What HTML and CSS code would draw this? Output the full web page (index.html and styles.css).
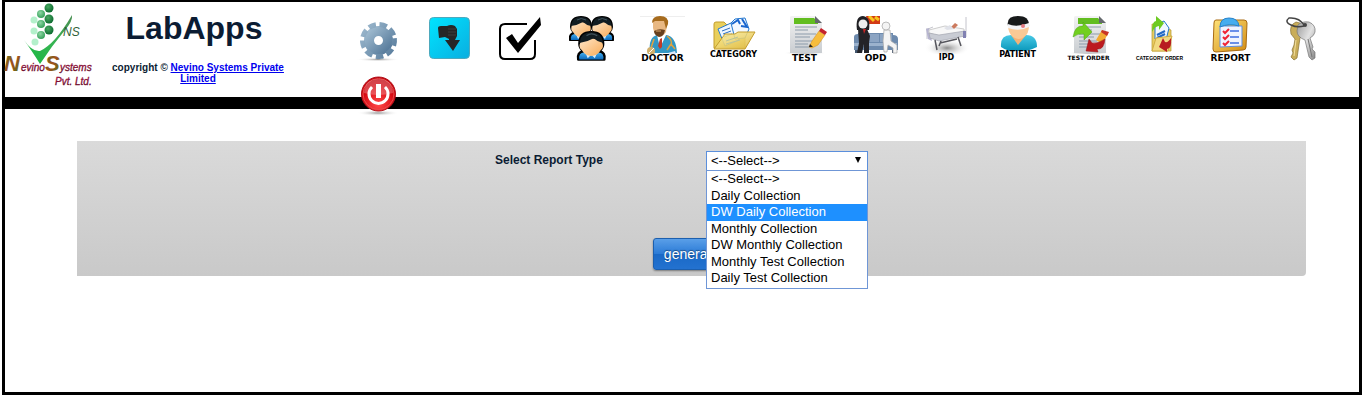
FILE: index.html
```html
<!DOCTYPE html>
<html lang="en">
<head>
    <meta charset="UTF-8">
    <meta name="viewport" content="width=device-width, initial-scale=1.0">
    <title>LabApps</title>
    <link rel="stylesheet" href="styles.css">
</head>
<body>
    <div class="page">
        <!-- Header -->
        <header class="header">
            <svg class="logo" viewBox="0 0 90 88" role="img" aria-label="Nevino Systems Pvt. Ltd.">
                <defs>
                    <linearGradient id="tick" x1="0" y1="1" x2="1" y2="0"><stop offset="0" stop-color="#16b83f"/><stop offset=".5" stop-color="#35b552"/><stop offset="1" stop-color="#4b8f54"/></linearGradient>
                    <linearGradient id="cap" x1="0" y1="0" x2="1" y2="1"><stop offset="0" stop-color="#4f7a1c"/><stop offset=".5" stop-color="#a2501c"/><stop offset="1" stop-color="#3c7a18"/></linearGradient>
                    <linearGradient id="word" x1="0" y1="0" x2="0" y2="1"><stop offset="0" stop-color="#d01050"/><stop offset="1" stop-color="#400818"/></linearGradient>
                    <radialGradient id="dot" cx=".4" cy=".35" r=".7"><stop offset="0" stop-color="#49a962"/><stop offset="1" stop-color="#08662b"/></radialGradient>
                    <radialGradient id="dot2" cx=".4" cy=".35" r=".7"><stop offset="0" stop-color="#8ed7a4"/><stop offset="1" stop-color="#2f9c54"/></radialGradient>
                </defs>
                <path d="M19 36 Q27 48 35 47 Q50 40 67 11 Q68 17 60 26 Q46 43 35 60 Q29 50 19 36Z" fill="url(#tick)"/>
                <g fill="#b4f0cb"><circle cx="29" cy="16" r="3.500"/><circle cx="29" cy="27" r="3.500"/><circle cx="30" cy="38" r="3.500"/></g>
                <g fill="url(#dot2)"><circle cx="36" cy="10" r="4"/><circle cx="36" cy="20" r="4"/><circle cx="36" cy="31" r="4"/></g>
                <g fill="url(#dot)"><circle cx="44" cy="4" r="4.500"/><circle cx="44" cy="15" r="4.500"/><circle cx="44" cy="26" r="4.500"/></g>
                <text class="logo-ns" x="58" y="32">NS</text>
                <text class="logo-cap" x="-1" y="67">N</text>
                <text class="logo-word" x="16" y="67">evino</text>
                <text class="logo-cap" x="40" y="67">S</text>
                <text class="logo-word" x="55" y="67">ystems</text>
                <text class="logo-word" x="50" y="81">Pvt. Ltd.</text>
            </svg>
            <div class="brand">
                <h1>LabApps</h1>
                <p>copyright © <a href="#">Nevino Systems Private Limited</a></p>
            </div>
            <nav class="menu">
                <a href="#" aria-label="Settings">
                    <svg viewBox="0 0 45 45">
                        <defs>
                            <linearGradient id="steel" x1="0" y1="0" x2="1" y2="1"><stop offset="0" stop-color="#9db9ce"/><stop offset="1" stop-color="#587c9c"/></linearGradient>
                            <radialGradient id="shade"><stop offset="0" stop-color="#999"/><stop offset="1" stop-color="#fff" stop-opacity="0"/></radialGradient>
                        </defs>
                        <ellipse cx="22" cy="43.500" rx="22" ry="2" fill="url(#shade)"/>
                        <circle cx="22.500" cy="24.500" r="9.500" fill="none" stroke="url(#steel)" stroke-width="10"/>
                        <circle cx="22.500" cy="24.500" r="16" fill="none" stroke="url(#steel)" stroke-width="5" stroke-dasharray="7.500 3.670" transform="rotate(-8 22.500 24.500)"/>
                    </svg>
                </a>
                <a href="#" aria-label="Download">
                    <svg viewBox="0 0 45 45">
                        <defs>
                            <linearGradient id="cyan" x1="0" y1="0" x2="1" y2="1"><stop offset="0" stop-color="#00e4ff"/><stop offset="1" stop-color="#0aaee0"/></linearGradient>
                        </defs>
                        <rect x="2.500" y="1.500" width="40" height="41" rx="4" fill="url(#cyan)" stroke="#4ea9bd"/>
                        <path d="M11 12 Q11 10 14 10 L20 10 Q24 8 28 10 L30 13 V20 L28 24 H33 L26 35 L18 24 H22 V23 L18 21 L12 22Z" fill="#262626"/>
                        <path d="M21 13h8M21 16h8M21 19h8" stroke="#3d3d3d"/>
                    </svg>
                </a>
                <a href="#" aria-label="Approve">
                    <svg viewBox="0 0 45 45">
                        <path d="M29 8 H7 Q2 8 2 13 V38 Q2 43 7 43 H32 Q37 43 37 38 V24" fill="none" stroke="#000" stroke-width="2"/>
                        <path d="M8 22 L14 18 L20 27 L42 1 L43 9 L20 37Z"/>
                    </svg>
                </a>
                <a href="#" aria-label="Users">
                    <svg viewBox="0 0 45 45">
                        <defs>
                            <linearGradient id="skin" x1="0" y1="0" x2="1" y2="1"><stop offset="0" stop-color="#ffe6c8"/><stop offset="1" stop-color="#f8ab58"/></linearGradient>
                            <linearGradient id="shirt" x1="0" y1="0" x2="0" y2="1"><stop offset="0" stop-color="#43aef0"/><stop offset="1" stop-color="#0b68ba"/></linearGradient>
                            <g id="person">
                                <path d="M1 24 Q0 18 5 17 Q2 14 2 11 Q2 1 12 1 Q22 1 22 11 Q22 14 19 17 Q24 18 23 24Z" fill="#000" stroke="#000" stroke-width="2" stroke-linejoin="round"/>
                                <path d="M2 24 Q1 18 6 18 H18 Q23 18 22 24Z" fill="url(#shirt)"/>
                                <path d="M7 18 L9 23 L12 20 L15 23 L17 18Z" fill="#d5ecfc"/>
                                <path d="M3 9 Q12 3 21 9 Q23 14 20 16 Q17 21 12 21 Q7 21 4 16 Q1 14 3 9Z" fill="url(#skin)"/>
                                <path d="M2 10 Q3 1 12 1 Q21 1 22 10 Q17 9 14 6 Q9 9 2 10Z" fill="#121d22"/>
                                <path d="M8 4 Q12 1 17 4" fill="none" stroke="#40525c"/>
                            </g>
                        </defs>
                        <use href="#person"/>
                        <use href="#person" x="21"/>
                        <use href="#person" transform="translate(8 15) scale(1.190)"/>
                    </svg>
                </a>
                <a href="#">
                    <svg class="art" viewBox="0 0 45 38">
                        <path d="M0 .500 H45" stroke="#eee"/>
                        <path d="M10 37 Q8 20 18 19 H26 Q36 20 37 37Z" fill="#3297c4"/>
                        <path d="M17 19 L20 32 L26 19Z" fill="#fff"/>
                        <path d="M20 23 L22 22 L22 31 L20 33 L18 30Z" fill="#c13b28"/>
                        <path d="M13 6 Q13 1 20 1 Q27 1 27 7 L26 16 Q23 21 19 20 Q14 18 13 12Z" fill="#e8b883"/>
                        <path d="M12 7 Q12 0 20 0 Q29 0 28 8 L26 13 L24 5 H15Z" fill="#a66b1d"/>
                        <path d="M14 15 Q19 12 25 14 Q24 21 19 21 Q14 19 14 15Z" fill="#67401e"/>
                        <path d="M16 15 h5" stroke="#dca76c"/>
                        <path d="M27 20 Q33 24 31 30 M31 28 L27 34 M31 28 L35 33 M14 23 L11 32" fill="none" stroke="#e3a23b" stroke-width="1.500"/>
                        <circle cx="11" cy="35" r="4" fill="#d0b06e"/>
                        <path d="M9 37 L14 32" stroke="#fff"/>
                        <path d="M28 37 L35 35 L36 38 H29Z" fill="#dce9fa"/>
                    </svg>
                    <span class="label">DOCTOR</span>
                </a>
                <a href="#">
                    <svg class="art art-short" viewBox="0 0 45 35">
                        <defs>
                            <linearGradient id="folder" x1="0" y1="0" x2="1" y2="1"><stop offset="0" stop-color="#fff3a3"/><stop offset="1" stop-color="#dcb63d"/></linearGradient>
                        </defs>
                        <path d="M3 32 V8 Q3 6 5 6 H13 L16 9 H34 V32Z" fill="#e9cf5c" stroke="#c49d2c"/>
                        <path d="M7 13 L20 7 L28 24 L14 30Z" fill="#eef6ff" stroke="#2579cf"/>
                        <path d="M20 7 L24 3 L34 2 L38 13 L34 22 L24 23Z" fill="#f4f9ff" stroke="#2579cf"/>
                        <path d="M11 15l8-3M12 18l8-3M13 21l8-3" stroke="#2c6fc4"/>
                        <path d="M21 8l6-4 2 4M31 3l5 8-6-1" fill="none" stroke="#1a66cf" stroke-width="2"/>
                        <path d="M3 33 L14 18 H24 L27 16 H44 L34 33Z" fill="url(#folder)" fill-opacity=".88" stroke="#c49d2c"/>
                        <path d="M15 25l12-4M15 28l14-4" stroke="#b7c49c"/>
                    </svg>
                    <span class="label label-small">CATEGORY</span>
                </a>
                <a href="#">
                    <svg class="art" viewBox="0 0 45 38">
                        <defs>
                            <linearGradient id="paper" x1="0" y1="0" x2="0" y2="1"><stop offset="0" stop-color="#f3f3f3"/><stop offset="1" stop-color="#c9cdd1"/></linearGradient>
                            <g id="sheet">
                                <ellipse cx="23" cy="37" rx="22" ry="2" fill="url(#shade)"/>
                                <path d="M9 0 H33 L40 7 V37 H8 V1Z" fill="url(#paper)"/>
                                <path d="M12 2 H32 L36 6 V8 H12Z" fill="#62bd20"/>
                                <path d="M33 0 L40 7 H33Z" fill="#64686c"/>
                                <path d="M13 11h22M13 14h13M13 18h21M13 21h15M13 25h18M13 28h13M13 31h16" stroke="#8c9baa"/>
                            </g>
                        </defs>
                        <use href="#sheet"/>
                        <path d="M27 31 L30 25 L37 15 L43 19 L36 29 L30 32Z" fill="#f7bd3d" stroke="#d18a1b" stroke-width=".500"/>
                        <path d="M37 15 L39 12 L45 16 L43 19Z" fill="#c4232c"/>
                        <path d="M27 31 L28 28 L31 31Z" fill="#222"/>
                    </svg>
                    <span class="label">TEST</span>
                </a>
                <a href="#">
                    <svg class="art" viewBox="0 0 45 38">
                        <path d="M13 0 H27 V8 H15Z" fill="#d23a16"/>
                        <path d="M16 0 L21 5 M22 1 L26 4" stroke="#f7c51e" stroke-width="3"/>
                        <path d="M1 21 Q1 18 5 18 V17 H40 V19 Q45 19 45 23 V34 H1Z" fill="#6d8aad"/>
                        <path d="M14 18 h12 v8 h-12z M27 18 h12 v8 h-12z" fill="#8ba4c3"/>
                        <path d="M1 27 H44 V30 H1Z" fill="#9bb2cd"/>
                        <path d="M2 34h5v3h-5zM39 34h5v3h-5z" fill="#44576f"/>
                        <path d="M4 14 Q2 0 10 0 Q18 1 16 14Z" fill="#202024"/>
                        <circle cx="10" cy="8" r="4.500" fill="#eee"/>
                        <path d="M5 13 H14 L17 20 L16 27 L16 37 H11 V28 L9 37 H4 L6 27Z" fill="#242428"/>
                        <path d="M10 13 L11 18 L13 13Z" fill="#c52525"/>
                        <g fill="#f4f4f4" stroke="#a3a3a3" stroke-width=".700"><path d="M31 14 H37 L38 25 L44 29 L44 37 H40 V32 L35 29 L34 36 H31 L30 25Z"/><circle cx="33" cy="10" r="4"/></g>
                    </svg>
                    <span class="label">OPD</span>
                </a>
                <a href="#">
                    <svg class="art" viewBox="0 0 45 38">
                        <defs>
                            <radialGradient id="floor"><stop offset="0" stop-color="#8c8c8c"/><stop offset="1" stop-color="#fff" stop-opacity="0"/></radialGradient>
                        </defs>
                        <ellipse cx="23" cy="32" rx="23" ry="9" fill="url(#floor)"/>
                        <path d="M3 12 V23 M42 1 V21 M4 13 L9 11" fill="none" stroke="#c4c4cc"/>
                        <path d="M2 13 L5 12 L8 25 L4 23Z" fill="#b7b5d0"/>
                        <path d="M5 14 L21 10 L40 13 L40 17 L15 20 L5 17Z" fill="#f8f8f8" stroke="#cdcdcd"/>
                        <path d="M5 17 L15 19 L41 15 V20 L15 25 L6 22Z" fill="#c9ccd4" stroke="#a3a6b0" stroke-width=".700"/>
                        <path d="M39 15h3v7h-3z" fill="#8181b2"/>
                        <path d="M26 12 L31 7 L34 9 L30 13Z" fill="#cc7a5e"/>
                        <path d="M20 12 L26 9 L30 13 L23 14Z" fill="#e0e2e9"/>
                        <path d="M11 24 L13 34 M17 25 L15 30 M34 21 L37 30 M16 27 L33 23" fill="none" stroke="#55555c" stroke-width="1.500"/>
                    </svg>
                    <span class="label label-small">IPD</span>
                </a>
                <a href="#">
                    <svg class="art art-short" viewBox="0 0 45 35">
                        <defs>
                            <linearGradient id="teal" x1="0" y1="0" x2="0" y2="1"><stop offset="0" stop-color="#48c9e6"/><stop offset="1" stop-color="#0795b8"/></linearGradient>
                        </defs>
                        <path d="M6 31 Q5 19 16 19 H31 Q42 19 42 31 Q32 36 23 36 Q13 36 6 31Z" fill="url(#teal)"/>
                        <path d="M16 19 L23 29 L31 19Z" fill="#f3b277"/>
                        <path d="M13 9 H34 Q34 18 29 21 Q24 25 18 21 Q13 17 13 9Z" fill="#fac995"/>
                        <path d="M13 10 Q11 0 23 0 Q35 0 34 11Z" fill="#17191a"/>
                        <path d="M13 8 Q21 12 34 7 V11 Q24 16 13 12Z" fill="#f3f3f6"/>
                        <circle cx="28" cy="10" r="2" fill="#e37a80"/>
                    </svg>
                    <span class="label label-small">PATIENT</span>
                </a>
                <a href="#">
                    <svg class="art" viewBox="0 0 45 38">
                        <defs>
                            <g id="arrows">
                                <path d="M7 21 Q9 9 17 10 V6 L26 16 L18 24 V18 Q12 17 7 21Z" fill="#72cf20" stroke="#4ba314" stroke-width=".500"/>
                                <path d="M39 23 Q38 34 31 33 L32 36 L20 35 L23 23 L26 27 Q32 28 39 23Z" fill="#bc1b20" stroke="#941015" stroke-width=".500"/>
                            </g>
                        </defs>
                        <use href="#sheet"/>
                        <path d="M30 24 L36 14 L42 18 L36 28Z" fill="#f3aa31"/>
                        <path d="M36 14 L43 16 L41 20 L35 16Z" fill="#c93525"/>
                        <use href="#arrows"/>
                    </svg>
                    <span class="label label-tiny">TEST ORDER</span>
                </a>
                <a href="#">
                    <svg class="art" viewBox="0 0 45 38">
                        <path d="M15 8 L22 9 L34 14 V35 H15Z" fill="#e9cc61" stroke="#b5962f" stroke-width=".700"/>
                        <path d="M18 9 L27 5 L32 12 L29 24 L18 23Z" fill="#f1f8ff" stroke="#2277cc"/>
                        <path d="M20 19l8-4M20 22l8-4" stroke="#2368c4" stroke-width="2"/>
                        <path d="M15 35 L19 22 L35 20 L31 35Z" fill="#f2d980" stroke="#cfac42"/>
                        <path d="M15 16 Q15 5 19 5 V0 L27 7 L22 14 V10 Q18 10 15 16Z" fill="#6dca22"/>
                        <path d="M34 22 Q35 33 30 33 L30 36 L22 31 L26 22 L28 26 Q31 27 34 22Z" fill="#b81c20"/>
                    </svg>
                    <span class="label label-narrow">CATEGORY ORDER</span>
                </a>
                <a href="#">
                    <svg class="art" viewBox="0 0 45 38">
                        <defs>
                            <linearGradient id="board" x1="0" y1="0" x2="1" y2="1"><stop offset="0" stop-color="#ffe37a"/><stop offset="1" stop-color="#d28b12"/></linearGradient>
                        </defs>
                        <path d="M8 4 H36 Q39 4 39 7 L38 31 Q38 34 35 34 L8 36 Q5 36 5 33 L6 7 Q6 4 8 4Z" fill="url(#board)" stroke="#a86b12"/>
                        <path d="M12 10 H34 V30 L12 31Z" fill="#f0f4ff" stroke="#618fe0"/>
                        <path d="M12 11 Q12 2 21 2 Q30 2 31 10 Q21 7 12 11Z" fill="#46adf0" stroke="#2583cb"/>
                        <path d="M22 15h9M22 21h9M22 27h9" stroke="#6a8fe9" stroke-width="2"/>
                        <path d="M15 15l2 2 4-4M15 21l2 2 4-4M15 27l2 2 4-4" fill="none" stroke="#f02435" stroke-width="2"/>
                    </svg>
                    <span class="label">REPORT</span>
                </a>
                <a href="#" aria-label="Change password">
                    <svg viewBox="0 0 45 45">
                        <defs>
                            <linearGradient id="silver" x1="0" y1="0" x2="1" y2="1"><stop offset="0" stop-color="#9b9b9b"/><stop offset=".5" stop-color="#e2e2e2"/><stop offset="1" stop-color="#858585"/></linearGradient>
                        </defs>
                        <path d="M17 6 Q26 7 26 17 L21 22 L18 42 L15 44 L12 41 L14 37 L13 34 L15 29 L16 23 L12 18 Q10 9 17 6Z" fill="#c9ad59" stroke="#857035" stroke-width=".700"/>
                        <path d="M17 24 L15 40" stroke="#f2df9f"/>
                        <path d="M19 9 Q23 5 30 6 Q37 9 36 16 Q35 20 31 22 L34 31 L33 33 L36 36 L36 42 L33 44 L30 41 L26 24 Q18 21 18 15Z" fill="url(#silver)" stroke="#777" stroke-width=".700"/>
                        <path d="M29 23 L33 41" stroke="#777"/>
                        <path d="M25 9 Q20 1 10 2 Q5 6 12 9 Q18 12 25 10" fill="none" stroke="#444" stroke-width="1.500"/>
                        <circle cx="26" cy="9" r="2" fill="#444"/>
                    </svg>
                </a>
                <a href="#" aria-label="Logout">
                    <svg viewBox="0 0 45 45">
                        <defs>
                            <radialGradient id="red" cx=".5" cy=".8" r=".8"><stop offset="0" stop-color="#ff4a4a"/><stop offset=".6" stop-color="#d90b14"/><stop offset="1" stop-color="#b8000a"/></radialGradient>
                        </defs>
                        <ellipse cx="22" cy="37" rx="21" ry="3" fill="url(#shade)"/>
                        <circle cx="22.500" cy="18" r="17" fill="url(#red)" stroke="#b5121b"/>
                        <circle cx="22.500" cy="18" r="15.500" fill="none" stroke="#e84a4a"/>
                        <path d="M8 17 Q9 3 22.500 3 Q36 3 37 17 Q22 21 8 17Z" fill="#fff" fill-opacity=".25"/>
                        <path d="M16 11 A9.500 9.500 0 1 0 29 11" fill="none" stroke="#fff" stroke-width="3"/>
                        <path d="M22.500 8 V22" stroke="#fff" stroke-width="5"/>
                    </svg>
                </a>
            </nav>
        </header>
        <div class="bar"></div>

        <!-- Report Form -->
        <form class="panel">
            <div class="row">
                <label for="report-type">Select Report Type</label>
                <div class="dropdown">
                    <select id="report-type">
                        <option>&lt;--Select--&gt;</option>
                        <option>Daily Collection</option>
                        <option>DW Daily Collection</option>
                        <option>Monthly Collection</option>
                        <option>DW Monthly Collection</option>
                        <option>Monthly Test Collection</option>
                        <option>Daily Test Collection</option>
                    </select>
                    <ul class="options">
                        <li>&lt;--Select--&gt;</li>
                        <li>Daily Collection</li>
                        <li class="active">DW Daily Collection</li>
                        <li>Monthly Collection</li>
                        <li>DW Monthly Collection</li>
                        <li>Monthly Test Collection</li>
                        <li>Daily Test Collection</li>
                    </ul>
                </div>
            </div>
            <button type="button" class="generate">generate</button>
        </form>
    </div>
</body>
</html>
```
FILE: styles.css
```css
* {
    box-sizing: border-box;
}

body {
    margin: 0 4px 5px 2px;
    font-family: "Liberation Sans", Arial, sans-serif;
    color: #0b1c33;
    background: #fff;
}

.page {
    min-height: calc(100vh - 5px);
    border: 3px solid #000;
    border-top-width: 2px;
}

.header {
    display: flex;
    align-items: flex-start;
    position: relative;
    z-index: 1;
}

.logo {
    flex: none;
    width: 90px;
    height: 88px;
    margin-top: 2px;
    overflow: visible;
}

.logo-ns {
    font-size: 12px;
    font-style: italic;
    fill: #2f5f36;
}

.logo-cap {
    font-size: 22px;
    font-style: italic;
    font-weight: bold;
    fill: url(#cap);
}

.logo-word {
    font-size: 10px;
    font-style: italic;
    fill: url(#word);
    stroke: #7a0c30;
    stroke-width: 0.3px;
}

.brand {
    flex: none;
    width: 186px;
    margin-left: 10px;
    padding-top: 8px;
    text-align: center;
}

.brand h1 {
    margin: 0;
    padding-right: 8px;
    font-size: 32px;
    line-height: 36px;
}

.brand p {
    margin: 16px 0 0;
    font-size: 10px;
    font-weight: bold;
    line-height: 11px;
}

.brand a {
    color: #0000ee;
}

.menu {
    flex: 1;
    display: flex;
    flex-wrap: wrap;
    row-gap: 15px;
    margin-left: 52px;
    padding-top: 14px;
}

.menu a {
    display: flex;
    flex-direction: column;
    align-items: center;
    width: 71px;
    height: 45px;
    color: #000;
    text-decoration: none;
}

.menu svg {
    flex: none;
    width: 45px;
    height: 45px;
}

.menu .art {
    height: 38px;
}

.menu .art-short {
    height: 35px;
}

.label {
    font-family: "DejaVu Sans", sans-serif;
    font-size: 9px;
    font-weight: bold;
    line-height: 8px;
    white-space: nowrap;
}

.label-small {
    font-size: 8px;
}

.label-tiny {
    font-size: 6px;
}

.label-narrow {
    font-family: "Liberation Sans", Arial, sans-serif;
    font-size: 5px;
}

/* the power icon hangs over this bar */
.bar {
    height: 12px;
    margin: -24px -4px 0 0;
    background: #000;
}

.panel {
    display: flex;
    flex-direction: column;
    align-items: center;
    margin: 32px 53px 0 72px;
    padding: 10px 0 6px;
    border-bottom-right-radius: 4px;
    background: linear-gradient(#dadada, #c9c9c9);
}

.row {
    display: flex;
    margin-bottom: 67px;
}

.row label {
    width: 211px;
    font-size: 12px;
    font-weight: bold;
    line-height: 18px;
}

.dropdown {
    position: relative;
    width: 162px;
    margin-right: 20px;
}

.dropdown select {
    display: block;
    width: 100%;
    height: 20px;
    padding: 0 4px 2px;
    border: 1px solid #5b8fdc;
    appearance: none;
    font-family: inherit;
    font-size: 13px;
    color: #000;
    background: #fff;
}

.dropdown::after {
    content: "";
    position: absolute;
    top: 6px;
    right: 7px;
    border: 3px solid transparent;
    border-top: 6px solid #000;
    border-bottom: 0;
}

.options {
    position: absolute;
    top: 19px;
    left: 0;
    display: grid;
    grid-auto-rows: 1fr;
    width: 100%;
    height: 119px;
    margin: 0;
    padding: 0 0 1px;
    border: 1px solid #6f96d6;
    list-style: none;
    font-size: 13px;
    line-height: 16px;
    color: #000;
    background: #fff;
}

.options li {
    padding-left: 4px;
}

.options .active {
    color: #fff;
    background: #1e90ff;
}

.generate {
    padding: 0 10px;
    border: 1px solid #1c5fae;
    border-radius: 3px;
    font-family: inherit;
    font-size: 14px;
    line-height: 30px;
    color: #fff;
    text-shadow: 0 -1px 1px rgba(0, 0, 0, 0.4);
    background: linear-gradient(#5a9fe8, #2a7ad6 50%, #1a69c6 50%, #2372d0);
    box-shadow: 0 1px 2px rgba(0, 0, 0, 0.4);
}
```
